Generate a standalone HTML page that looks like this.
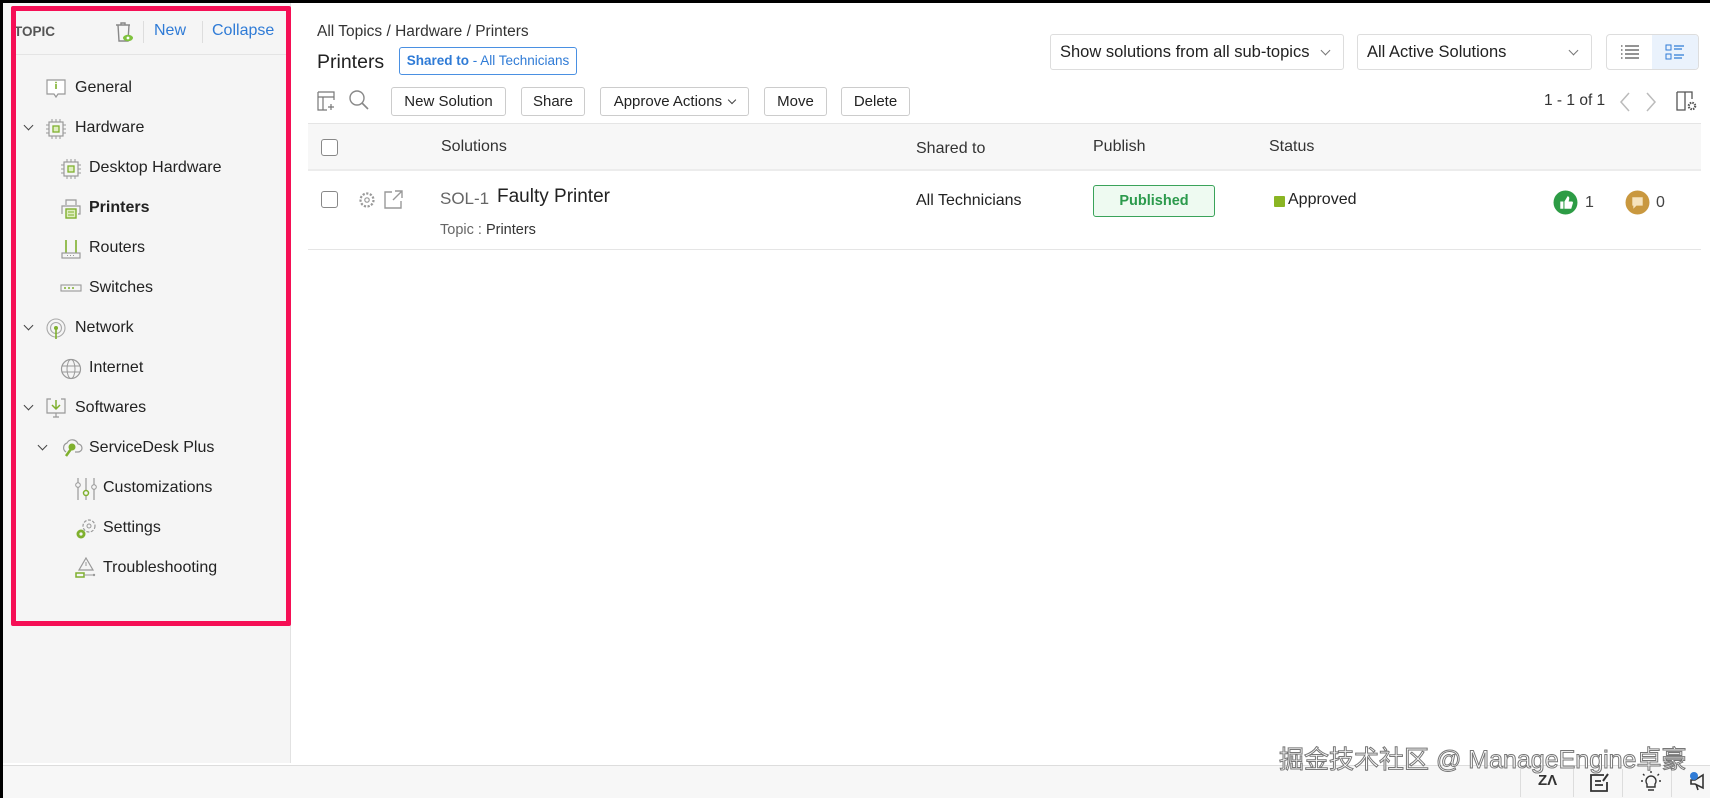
<!DOCTYPE html>
<html><head><meta charset="utf-8"><style>
*{box-sizing:border-box;margin:0;padding:0}
body{width:1710px;height:795px;overflow:hidden;background:#000;font-family:"Liberation Sans","Noto Sans CJK SC",sans-serif;color:#222;position:relative}
.page{position:absolute;left:3px;top:3px;right:0;bottom:0;background:#fff}
.side{position:absolute;left:0;top:0;width:288px;height:760px;background:#f5f5f5;border-right:1px solid #e2e2e2}
.pink{position:absolute;left:8px;top:3px;width:280px;height:620px;border:5px solid #f50f55;border-radius:2px}
.abs{position:absolute;white-space:nowrap}
.item{position:absolute;font-size:16px;color:#222;line-height:20px;white-space:nowrap}
.btn{position:absolute;top:84px;height:29px;border:1px solid #ccc;border-radius:3px;font-size:15px;line-height:27px;text-align:center;color:#222;background:#fff;white-space:nowrap}
.sel{position:absolute;top:31px;height:36px;border:1px solid #ddd;border-radius:3px;font-size:16.5px;line-height:34px;padding-left:9px;color:#222;white-space:nowrap}
.cb{position:absolute;width:17px;height:17px;border:1.5px solid #888;border-radius:3px;background:#fff}
.bottom{position:absolute;left:0;right:0;top:762px;height:33px;background:#f7f7f7;border-top:1px solid #ddd}
.chev{position:absolute;width:7px;height:7px;border-right:1.8px solid #444;border-bottom:1.8px solid #444;transform:rotate(45deg)}
</style></head><body>
<div class="page">
<div class="side">
 <div class="abs" style="left:11px;top:21px;font-size:13.5px;font-weight:bold;color:#555">TOPIC</div>
 <svg class="abs" style="left:110px;top:17px" width="22" height="24" viewBox="0 0 22 24"><path d="M3 5h14M8 5V3h4v2M5 5l1 16h9l1-16" fill="none" stroke="#888" stroke-width="1.4"/><ellipse cx="15" cy="18" rx="5" ry="3.2" fill="#7fc23e"/><circle cx="15" cy="18" r="1.4" fill="#fff"/></svg>
 <div class="abs" style="left:140px;top:18px;width:1px;height:22px;background:#ddd"></div>
 <div class="abs" style="left:151px;top:19px;font-size:16px;color:#2f7bd6">New</div>
 <div class="abs" style="left:199px;top:18px;width:1px;height:22px;background:#ddd"></div>
 <div class="abs" style="left:209px;top:19px;font-size:16px;color:#2f7bd6">Collapse</div>
 <div class="abs" style="left:8px;top:51px;width:280px;height:1px;background:#e4e4e4"></div>

 <svg class="abs" style="left:42px;top:75px" width="22" height="22" viewBox="0 0 22 22"><path d="M2 2h18v14H13l-2 3-2-3H2z" fill="#fff" stroke="#999" stroke-width="1.2"/><path d="M11 6v5" stroke="#7fb02e" stroke-width="1.6"/><circle cx="11" cy="4.5" r=".9" fill="#7fb02e"/></svg>
 <div class="item" style="left:72px;top:75px">General</div>

 <div class="chev" style="left:22px;top:119px"></div>
 <svg class="abs" style="left:42px;top:115px" width="22" height="22" viewBox="0 0 22 22"><rect x="4" y="4" width="14" height="14" fill="none" stroke="#999" stroke-width="1.2"/><rect x="8" y="8" width="6" height="6" fill="#dfeec0" stroke="#7fb02e" stroke-width="1.3"/><path d="M7 1v3M11 1v3M15 1v3M7 18v3M11 18v3M15 18v3M1 7h3M1 11h3M1 15h3M18 7h3M18 11h3M18 15h3" stroke="#999"/></svg>
 <div class="item" style="left:72px;top:115px">Hardware</div>

 <svg class="abs" style="left:57px;top:155px" width="22" height="22" viewBox="0 0 22 22"><rect x="4" y="4" width="14" height="14" fill="none" stroke="#999" stroke-width="1.2"/><rect x="8" y="8" width="6" height="6" fill="#dfeec0" stroke="#7fb02e" stroke-width="1.3"/><path d="M7 1v3M11 1v3M15 1v3M7 18v3M11 18v3M15 18v3M1 7h3M1 11h3M1 15h3M18 7h3M18 11h3M18 15h3" stroke="#999"/></svg>
 <div class="item" style="left:86px;top:155px">Desktop Hardware</div>

 <svg class="abs" style="left:57px;top:195px" width="22" height="22" viewBox="0 0 22 22"><path d="M6 7V2h10v5M2 16V8h18v8h-2" fill="none" stroke="#999" stroke-width="1.2"/><rect x="6" y="11" width="10" height="9" fill="#dfeec0" stroke="#7fb02e" stroke-width="1.4"/><path d="M8 14h6M8 17h6" stroke="#7fb02e"/></svg>
 <div class="item" style="left:86px;top:195px;font-weight:bold">Printers</div>

 <svg class="abs" style="left:57px;top:235px" width="22" height="22" viewBox="0 0 22 22"><path d="M6 2v13M16 2v13" stroke="#7fb02e" stroke-width="1.6"/><rect x="2" y="15" width="18" height="5" fill="none" stroke="#999" stroke-width="1.2"/><path d="M7 17.5h1M10 17.5h1M13 17.5h1" stroke="#999"/></svg>
 <div class="item" style="left:86px;top:235px">Routers</div>

 <svg class="abs" style="left:57px;top:277px" width="22" height="16" viewBox="0 0 22 16"><rect x="1" y="5" width="20" height="6" fill="none" stroke="#999" stroke-width="1.1"/><path d="M4 8h2M8 8h2M12 8h2" stroke="#7fb02e" stroke-width="1.5"/></svg>
 <div class="item" style="left:86px;top:275px">Switches</div>

 <div class="chev" style="left:22px;top:319px"></div>
 <svg class="abs" style="left:42px;top:315px" width="22" height="22" viewBox="0 0 22 22"><circle cx="11" cy="10" r="9" fill="none" stroke="#aaa" stroke-width="1.1"/><circle cx="11" cy="10" r="5.5" fill="none" stroke="#aaa" stroke-width="1.1"/><circle cx="11" cy="10" r="2" fill="#7fb02e"/><path d="M11 10v11" stroke="#7fb02e" stroke-width="1.6"/></svg>
 <div class="item" style="left:72px;top:315px">Network</div>

 <svg class="abs" style="left:57px;top:355px" width="22" height="22" viewBox="0 0 22 22"><circle cx="11" cy="11" r="9.5" fill="none" stroke="#999" stroke-width="1.2"/><ellipse cx="11" cy="11" rx="4" ry="9.5" fill="none" stroke="#999"/><path d="M2 8h18M2 14h18" stroke="#999"/></svg>
 <div class="item" style="left:86px;top:355px">Internet</div>

 <div class="chev" style="left:22px;top:399px"></div>
 <svg class="abs" style="left:42px;top:394px" width="22" height="24" viewBox="0 0 22 24"><path d="M6 2H2v14h18V2h-4M8 20h6M11 16v4" fill="none" stroke="#999" stroke-width="1.2"/><path d="M11 3v9M7 8l4 4 4-4" fill="none" stroke="#7fb02e" stroke-width="1.5"/></svg>
 <div class="item" style="left:72px;top:395px">Softwares</div>

 <div class="chev" style="left:36px;top:439px"></div>
 <svg class="abs" style="left:57px;top:434px" width="24" height="22" viewBox="0 0 24 22"><path d="M6 15a5 5 0 0 1 1-9 6 6 0 0 1 11 1 4 4 0 0 1 0 8h-3" fill="none" stroke="#999" stroke-width="1.2"/><circle cx="12" cy="10" r="3.5" fill="#7fb02e"/><path d="M11 12l-5 7" stroke="#7fb02e" stroke-width="2.5"/></svg>
 <div class="item" style="left:86px;top:435px">ServiceDesk Plus</div>

 <svg class="abs" style="left:72px;top:474px" width="22" height="24" viewBox="0 0 22 24"><path d="M3 1v22M11 1v22M19 1v22" stroke="#999" stroke-width="1.2"/><circle cx="3" cy="8" r="2.3" fill="#f5f5f5" stroke="#999"/><circle cx="11" cy="16" r="2.5" fill="#f5f5f5" stroke="#7fb02e" stroke-width="1.5"/><circle cx="19" cy="10" r="2.3" fill="#f5f5f5" stroke="#999"/></svg>
 <div class="item" style="left:100px;top:475px">Customizations</div>

 <svg class="abs" style="left:72px;top:514px" width="22" height="24" viewBox="0 0 22 24"><circle cx="14" cy="9" r="6" fill="none" stroke="#999" stroke-width="1.2" stroke-dasharray="3 1.5"/><circle cx="14" cy="9" r="2" fill="none" stroke="#999"/><circle cx="6" cy="17" r="4.5" fill="#7fb02e"/><circle cx="6" cy="17" r="1.6" fill="#f5f5f5"/></svg>
 <div class="item" style="left:100px;top:515px">Settings</div>

 <svg class="abs" style="left:72px;top:554px" width="22" height="24" viewBox="0 0 22 24"><path d="M11 1l7 12H4z" fill="none" stroke="#999" stroke-width="1.2"/><path d="M11 5v4" stroke="#999"/><rect x="1" y="16" width="8" height="4" fill="none" stroke="#7fb02e" stroke-width="1.5"/><path d="M9 18h10" stroke="#999"/><circle cx="19" cy="18" r="1.2" fill="#999"/></svg>
 <div class="item" style="left:100px;top:555px">Troubleshooting</div>
</div>
<div class="pink"></div>

<div class="abs" style="left:314px;top:20px;font-size:15.5px;color:#333">All Topics / Hardware / Printers</div>
<div class="abs" style="left:314px;top:48px;font-size:19.5px;color:#222">Printers</div>
<div class="abs" style="left:396px;top:44px;width:178px;height:28px;border:1px solid #4a90e2;border-radius:3px;font-size:13.5px;line-height:26px;text-align:center;color:#2f7bd6"><b>Shared to</b> - All Technicians</div>

<svg class="abs" style="left:314px;top:88px" width="20" height="20" viewBox="0 0 20 20"><path d="M1 1h16v8M1 1v18h9M1 6h16M6 6v13" fill="none" stroke="#777" stroke-width="1.2"/><path d="M14 13v6M11 16h6" stroke="#777" stroke-width="1.2"/></svg>
<svg class="abs" style="left:345px;top:86px" width="22" height="22" viewBox="0 0 22 22"><circle cx="9" cy="9" r="7" fill="none" stroke="#888" stroke-width="1.4"/><path d="M14 14l6 6" stroke="#888" stroke-width="1.6"/></svg>
<div class="btn" style="left:388px;width:115px">New Solution</div>
<div class="btn" style="left:518px;width:64px">Share</div>
<div class="btn" style="left:597px;width:149px">Approve Actions <span style="display:inline-block;width:6px;height:6px;border-right:1.5px solid #444;border-bottom:1.5px solid #444;transform:rotate(45deg);margin:0 0 3px 3px"></span></div>
<div class="btn" style="left:761px;width:63px">Move</div>
<div class="btn" style="left:838px;width:69px">Delete</div>

<div class="sel" style="left:1047px;width:294px">Show solutions from all sub-topics<span class="chev" style="right:14px;top:12px;border-color:#777;border-width:0 1.5px 1.5px 0"></span></div>
<div class="sel" style="left:1354px;width:235px">All Active Solutions<span class="chev" style="right:14px;top:12px;border-color:#777;border-width:0 1.5px 1.5px 0"></span></div>
<div class="abs" style="left:1603px;top:31px;width:93px;height:36px;border:1px solid #ddd;border-radius:4px;overflow:hidden">
 <div style="position:absolute;right:0;top:0;width:46px;height:36px;background:#eaf2fc"></div>
 <svg style="position:absolute;left:13px;top:9px" width="20" height="17" viewBox="0 0 20 17"><path d="M1 2h1.5M1 6h1.5M1 10h1.5M1 14h1.5M5 2h14M5 6h14M5 10h14M5 14h14" stroke="#555" stroke-width="1.3"/></svg>
 <svg style="position:absolute;left:58px;top:9px" width="20" height="17" viewBox="0 0 20 17"><rect x="1" y="1" width="5" height="5" fill="none" stroke="#2f7bd6"/><rect x="1" y="10" width="5" height="5" fill="none" stroke="#2f7bd6"/><path d="M9 2h10M9 5h8M9 11h10M9 14h8" stroke="#2f7bd6" stroke-width="1.2"/></svg>
</div>

<div class="abs" style="left:1541px;top:89px;font-size:15.5px;color:#333">1 - 1 of 1</div>
<svg class="abs" style="left:1616px;top:89px" width="12" height="20" viewBox="0 0 12 20"><path d="M10 1L2 10l8 9" fill="none" stroke="#bbb" stroke-width="1.5"/></svg>
<svg class="abs" style="left:1642px;top:89px" width="12" height="20" viewBox="0 0 12 20"><path d="M2 1l8 9-8 9" fill="none" stroke="#bbb" stroke-width="1.5"/></svg>
<svg class="abs" style="left:1673px;top:88px" width="22" height="22" viewBox="0 0 22 22"><path d="M1 1h15v7M1 1v18h8V1" fill="none" stroke="#555" stroke-width="1.3"/><circle cx="16" cy="15" r="3.2" fill="none" stroke="#555" stroke-width="2.2" stroke-dasharray="1.5 1"/></svg>

<div class="abs" style="left:305px;top:120px;width:1393px;height:48px;background:#f7f7f7;border-top:1px solid #e5e5e5;border-bottom:2px solid #ececec"></div>
<div class="cb" style="left:318px;top:136px"></div>
<div class="abs" style="left:438px;top:135px;font-size:16px;color:#333">Solutions</div>
<div class="abs" style="left:913px;top:137px;font-size:16px;color:#333">Shared to</div>
<div class="abs" style="left:1090px;top:135px;font-size:16px;color:#333">Publish</div>
<div class="abs" style="left:1266px;top:135px;font-size:16px;color:#333">Status</div>

<div class="cb" style="left:318px;top:188px"></div>
<svg class="abs" style="left:355px;top:188px" width="18" height="18" viewBox="0 0 18 18"><circle cx="9" cy="9" r="6.5" fill="none" stroke="#999" stroke-width="2.2" stroke-dasharray="2.2 1.5"/><circle cx="9" cy="9" r="2.2" fill="none" stroke="#999" stroke-width="1.2"/></svg>
<svg class="abs" style="left:381px;top:187px" width="19" height="19" viewBox="0 0 19 19"><path d="M8 2H1v16h16v-7M11 1h7v7M18 1L9 10" fill="none" stroke="#999" stroke-width="1.4"/></svg>
<div class="abs" style="left:437px;top:186px;font-size:17px;color:#666">SOL-1</div>
<div class="abs" style="left:494px;top:183px;font-size:19px;color:#222">Faulty Printer</div>
<div class="abs" style="left:437px;top:219px;font-size:14.5px;color:#666">Topic : <span style="color:#333">Printers</span></div>
<div class="abs" style="left:913px;top:189px;font-size:16px;color:#222">All Technicians</div>
<div class="abs" style="left:1090px;top:182px;width:122px;height:32px;border:1px solid #3aa35a;border-radius:3px;background:#eefaf1;color:#2b9a4c;font-weight:bold;font-size:14.5px;line-height:30px;text-align:center">Published</div>
<div class="abs" style="left:1271px;top:193px;width:11px;height:11px;background:#8ab523;border-radius:1px"></div>
<div class="abs" style="left:1285px;top:188px;font-size:16px;color:#222">Approved</div>
<svg class="abs" style="left:1550px;top:187px" width="25" height="25" viewBox="0 0 24 24"><circle cx="12" cy="12" r="11.5" fill="#2d9c45"/><path d="M7 11h3v7H7zM11 11l3-5c1 0 2 1 1.5 3L15 11h3c1 0 1.5 1 1 2l-1.5 5H11z" fill="#fff"/></svg>
<div class="abs" style="left:1582px;top:191px;font-size:16px;color:#444">1</div>
<svg class="abs" style="left:1622px;top:187px" width="25" height="25" viewBox="0 0 24 24"><circle cx="12" cy="12" r="11.5" fill="#c9983f"/><path d="M7 7h10v8h-6l-3 3v-3H7z" fill="#f6e3bd"/></svg>
<div class="abs" style="left:1653px;top:191px;font-size:16px;color:#444">0</div>
<div class="abs" style="left:305px;top:246px;width:1393px;height:1px;background:#e5e5e5"></div>

<div class="bottom">
 <div class="abs" style="left:1517px;top:3px;width:1px;height:28px;background:#ddd"></div>
 <div class="abs" style="left:1535px;top:6px;font-size:15px;color:#333;font-weight:bold">Z&#923;</div>
 <div class="abs" style="left:1570px;top:3px;width:1px;height:28px;background:#ddd"></div>
 <svg class="abs" style="left:1586px;top:7px" width="22" height="20" viewBox="0 0 22 20"><path d="M15 2H2v16h16V9M6 8h6M6 12h8" fill="none" stroke="#333" stroke-width="1.8"/><path d="M19 1l-5 7" stroke="#333" stroke-width="2"/></svg>
 <div class="abs" style="left:1619px;top:3px;width:1px;height:28px;background:#ddd"></div>
 <svg class="abs" style="left:1637px;top:4px" width="22" height="24" viewBox="0 0 22 24"><path d="M11 1v2M3 4l1.5 1.5M19 4l-1.5 1.5M1 11h2M19 11h2" stroke="#333" stroke-width="1.4"/><path d="M7 17v-3a5 5 0 1 1 8 0v3zM8 20h6" fill="none" stroke="#333" stroke-width="1.4"/></svg>
 <div class="abs" style="left:1668px;top:3px;width:1px;height:28px;background:#ddd"></div>
 <svg class="abs" style="left:1685px;top:4px" width="22" height="24" viewBox="0 0 22 24"><path d="M3 10h4l8-5v13l-8-4H3zM8 14l2 6" fill="none" stroke="#333" stroke-width="1.6"/><circle cx="6" cy="6" r="4" fill="#2f7bd6"/></svg>
</div>
<div class="abs" style="left:1276px;top:737px;font-size:25px;color:#fff;-webkit-text-stroke:1px #777">掘金技术社区 @ ManageEngine卓豪</div>
</div>
</body></html>
